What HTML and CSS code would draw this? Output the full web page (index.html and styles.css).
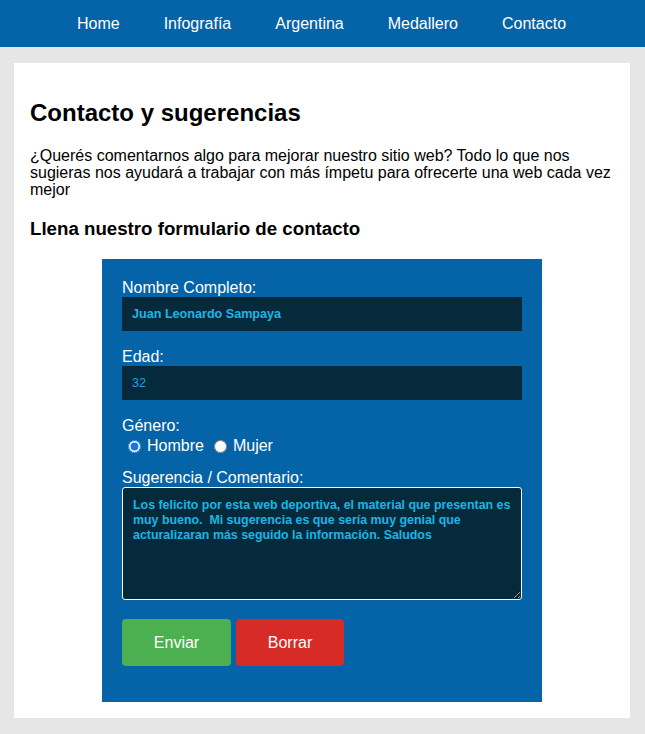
FILE: index.html
```html
<!DOCTYPE html>
<html lang="es">
<head>
<meta charset="utf-8">
<title>Contacto</title>
<link rel="stylesheet" href="styles.css">
</head>
<body>
<nav class="topnav">
  <a href="#">Home</a>
  <a href="#">Infografía</a>
  <a href="#">Argentina</a>
  <a href="#">Medallero</a>
  <a href="#">Contacto</a>
</nav>
<main class="page">
  <h1 class="title">Contacto y sugerencias</h1>
  <p class="intro">¿Querés comentarnos algo para mejorar nuestro sitio web? Todo lo que nos sugieras nos ayudará a trabajar con más ímpetu para ofrecerte una web cada vez mejor</p>
  <h3 class="subtitle">Llena nuestro formulario de contacto</h3>
  <form class="form">
    <label class="lbl" for="nombre">Nombre Completo:</label>
    <input class="field field-bold" id="nombre" type="text" value="Juan Leonardo Sampaya">
    <label class="lbl" for="edad">Edad:</label>
    <input class="field" id="edad" type="text" value="32">
    <div class="lbl lbl-genero">Género:</div>
    <div class="radios">
      <input type="radio" id="h" name="g" checked><label for="h">Hombre</label>
      <input type="radio" id="m" name="g"><label for="m">Mujer</label>
    </div>
    <label class="lbl lbl-com" for="com">Sugerencia / Comentario:</label>
    <textarea class="area" id="com">Los felicito por esta web deportiva, el material que presentan es muy bueno.  Mi sugerencia es que sería muy genial que acturalizaran más seguido la información. Saludos</textarea>
    <div class="buttons">
      <button type="button" class="btn btn-send">Enviar</button>
      <button type="button" class="btn btn-reset">Borrar</button>
    </div>
  </form>
</main>
</body>
</html>
```
FILE: styles.css
```css
html, body {
  margin: 0;
  padding: 0;
}
body {
  background: #e6e6e6;
  font-family: "Liberation Sans", Arial, sans-serif;
  color: #000;
  padding-bottom: 16px;
}
.topnav {
  background: #0563a8;
  height: 47px;
  display: flex;
  justify-content: center;
  align-items: center;
  gap: 44px;
  padding-right: 2px;
}
.topnav a {
  color: #fff;
  text-decoration: none;
  font-size: 16px;
  padding-top: 1px;
}
.page {
  background: #fff;
  margin: 16px 15px 0 14px;
  padding: 30px 16px 16px 16px;
}
.title {
  font-size: 24px;
  font-weight: bold;
  margin: 6px 0 0 0;
  line-height: 28px;
}
.intro {
  font-size: 16px;
  line-height: 17px;
  margin: 20px 0 0 0;
}
.subtitle {
  font-size: 18.7px;
  margin: 20px 0 0 0;
  line-height: 22px;
}
.form {
  background: #0563a8;
  width: 400px;
  margin: 19px auto 0 auto;
  padding: 20px 20px 36px 20px;
  display: flex;
  flex-direction: column;
}
.lbl {
  color: #fff;
  font-size: 16px;
  line-height: 18px;
}
.field {
  box-sizing: border-box;
  width: 400px;
  height: 34px;
  background: #042a3b;
  border: none;
  color: #1e9ee6;
  font-family: "Liberation Sans", Arial, sans-serif;
  font-size: 12.6px;
  padding: 0 10px;
  margin: 0 0 17px 0;
  outline: none;
}
.field-bold {
  color: #1bb6e6;
  font-weight: bold;
}
.radios {
  display: flex;
  align-items: center;
  color: #fff;
  font-size: 16px;
  line-height: 18px;
  margin-top: 2px;
  margin-bottom: 14px;
}
.radios input {
  margin: 0 6px 0 6px;
  width: 13px;
  height: 13px;
  accent-color: #1a73e8;
}
.radios label {
  margin-right: 4px;
}
.area {
  box-sizing: border-box;
  width: 400px;
  height: 113px;
  background: #042a3b;
  border: 1px solid #fff;
  border-radius: 3px;
  color: #1bb6e6;
  font-family: "Liberation Sans", Arial, sans-serif;
  font-weight: bold;
  font-size: 12.4px;
  line-height: 15px;
  padding: 10px 10px;
  margin: 0;
  outline: none;
}
.buttons {
  display: flex;
  gap: 5px;
  margin-top: 19px;
}
.btn {
  width: 109px;
  height: 47px;
  border: none;
  border-radius: 4px;
  color: #fff;
  font-family: "Liberation Sans", Arial, sans-serif;
  font-size: 16px;
  cursor: pointer;
}
.btn-send {
  background: #4caf50;
}
.btn-reset {
  background: #d62b27;
  width: 108px;
}
```
